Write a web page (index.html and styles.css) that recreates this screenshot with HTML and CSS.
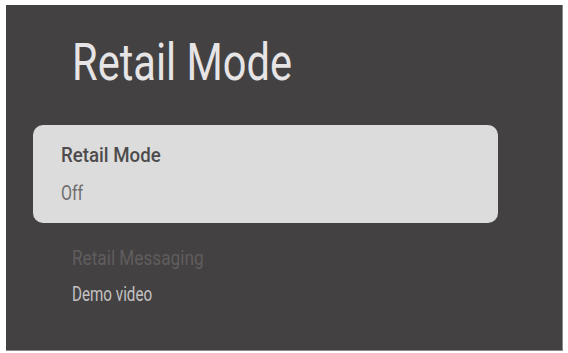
FILE: index.html
```html
<!DOCTYPE html>
<html>
<head>
<meta charset="utf-8">
<link rel="stylesheet" href="styles.css">
</head>
<body>
<div class="screen">
  <h1 class="title"><span class="squeeze">Retail Mode</span></h1>
  <div class="card">
    <div class="card-label"><span class="squeeze">Retail Mode</span></div>
    <div class="card-value"><span class="squeeze">Off</span></div>
  </div>
  <ul class="menu">
    <li class="menu-item disabled"><span class="squeeze">Retail Messaging</span></li>
    <li class="menu-item"><span class="squeeze">Demo video</span></li>
  </ul>
</div>
</body>
</html>
```

FILE: styles.css
```css
html, body {
  margin: 0;
  padding: 0;
  background: #ffffff;
  font-family: Roboto, "Liberation Sans", sans-serif;
}

.screen {
  margin: 5px 5px 0 6px;
  height: 346px;
  box-sizing: border-box;
  background: #434142;
  border-right: 1px solid #8a8889;
  border-bottom: 1px solid #8a8889;
  padding-top: 32px;
  overflow: hidden;
}

.squeeze {
  display: inline-block;
  transform-origin: left center;
  white-space: nowrap;
}

.title {
  margin: 0 0 0 66px;
  font-size: 52px;
  line-height: 52px;
  font-weight: 400;
  color: #e6e4e5;
}
.title .squeeze {
  transform: scaleX(0.8);
}

.card {
  margin: 36px 0 0 27px;
  width: 465px;
  height: 98px;
  box-sizing: border-box;
  background: #dddcdc;
  border-radius: 10px;
  padding: 20px 0 0 28px;
}

.card-label {
  font-size: 21px;
  line-height: 21px;
  font-weight: 500;
  color: #4d4b4c;
}
.card-label .squeeze {
  transform: scaleX(0.89);
}

.card-value {
  margin-top: 17px;
  font-size: 20px;
  line-height: 20px;
  color: #6e6c6d;
}
.card-value .squeeze {
  transform: scaleX(0.8);
}

.menu {
  list-style: none;
  margin: 25px 0 0 66px;
  padding: 0;
}

.menu-item {
  font-size: 20px;
  line-height: 20px;
  color: #c4c2c3;
  margin-bottom: 16px;
}
.menu-item .squeeze {
  transform: scaleX(0.76);
}
.menu-item.disabled {
  color: #605d5e;
}
.menu-item.disabled .squeeze {
  transform: scaleX(0.86);
}
```
